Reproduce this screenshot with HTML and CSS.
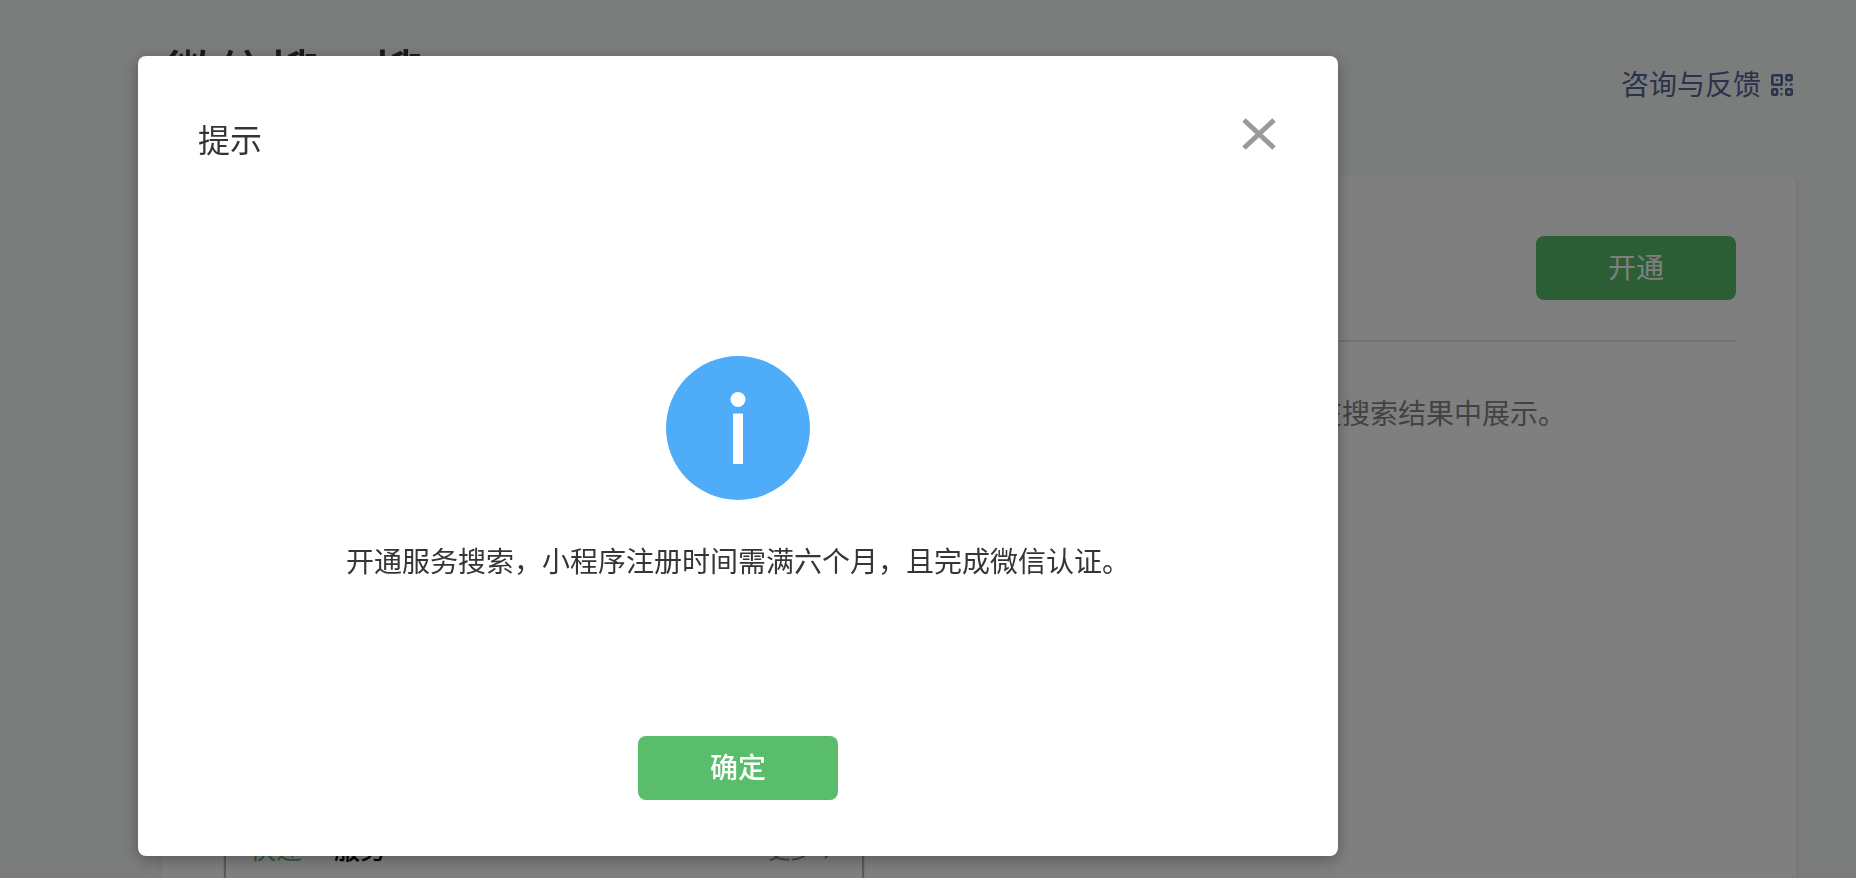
FILE: index.html
```html
<!DOCTYPE html>
<html lang="zh-CN">
<head>
    <meta charset="UTF-8">
    <meta name="viewport" content="width=device-width, initial-scale=1.0">
    <title>微信搜一搜</title>
    <link rel="stylesheet" href="styles.css">
</head>
<body>
    <main class="page">
        <header class="page-header">
            <h1>微信搜一搜</h1>
            <a href="#" class="feedback">
                咨询与反馈
                <svg class="qr" viewBox="0 0 22 22" fill="none" stroke="currentColor" stroke-width="2.6">
                    <rect x="1.3" y="1.3" width="9.4" height="9.4" rx="1"/>
                    <rect x="15.3" y="1.3" width="5.4" height="4.8" rx="1"/>
                    <rect x="1.3" y="15.3" width="4.8" height="5.4" rx="1"/>
                    <rect x="15.3" y="15.3" width="5.4" height="5.4" rx="1"/>
                    <path fill="currentColor" stroke="none" d="M5 5h2v2H5zM14 9.500h2v2h-2zM19 9.500h2.500v2H19zM9.500 14h2v2h-2zM9.500 19h2v2.500h-2z"/>
                </svg>
            </a>
        </header>

        <section class="card">
            <div class="card-head">
                <button type="button" class="btn">开通</button>
            </div>
            <p class="desc">在搜索结果中展示。</p>
            <div class="preview">
                <div class="preview-row">
                    <span class="keyword">快递</span>
                    <strong>服务</strong>
                    <a href="#" class="more">更多
                        <svg viewBox="0 0 10 18" fill="none" stroke="currentColor" stroke-width="2"><path d="M1 1l8 8-8 8"/></svg>
                    </a>
                </div>
            </div>
        </section>
    </main>

    <div class="mask">
        <div class="dialog" role="dialog" aria-modal="true" aria-labelledby="dialog-title">
            <div class="dialog-head">
                <h2 id="dialog-title">提示</h2>
                <button type="button" class="close" aria-label="关闭">
                    <svg viewBox="0 0 34 32" stroke="currentColor" stroke-width="5"><path d="M2 2l30 28M32 2L2 30"/></svg>
                </button>
            </div>
            <div class="dialog-body">
                <svg class="info" viewBox="0 0 144 144">
                    <circle cx="72" cy="72" r="72" fill="#4eacf9"/>
                    <circle cx="72" cy="43.500" r="7.500" fill="#fff"/>
                    <path fill="#fff" d="M67 57.500h10V108H67z"/>
                </svg>
                <p>开通服务搜索，小程序注册时间需满六个月，且完成微信认证。</p>
            </div>
            <div class="dialog-foot">
                <button type="button" class="btn btn-ok">确定</button>
            </div>
        </div>
    </div>
</body>
</html>
```

FILE: styles.css
```css
* {
    box-sizing: border-box;
}
body {
    margin: 0;
    height: 100vh;
    overflow: hidden;
    background: #f6f9f8;
    color: #353535;
    font-family: "Noto Sans CJK SC", "PingFang SC", sans-serif;
    font-size: 28px;
    line-height: 44px;
}
h1, h2, p {
    margin: 0;
}
a {
    text-decoration: none;
}
svg {
    display: block;
}

.page {
    height: 100vh;
    overflow: hidden;
    padding: 36px 60px 0 164px;
}
.page-header {
    display: flex;
    justify-content: space-between;
    align-items: center;
    margin-bottom: 68px;
}
h1 {
    font-size: 52px;
    font-weight: 500;
    line-height: 72px;
}
.feedback {
    display: flex;
    align-items: center;
    gap: 10px;
    padding: 22px 3px 0 0;
    color: #56649a;
}
.qr {
    width: 22px;
    height: 22px;
    margin-top: 4px;
}

.card {
    margin-left: -2px;
    padding: 60px;
    background: #fff;
    border-radius: 8px;
    box-shadow: 0 2px 6px rgba(0, 0, 0, 0.08);
}
.card-head {
    display: flex;
    justify-content: flex-end;
    padding-bottom: 40px;
    border-bottom: 2px solid #e4e4e4;
}
.btn {
    min-width: 200px;
    padding: 8px 40px 12px;
    border: none;
    border-radius: 8px;
    background: #59bd6c;
    color: #fff;
    font: inherit;
    cursor: pointer;
}
.btn:hover {
    background: #4fae62;
}
.btn-ok {
    font-weight: 500;
}
.desc {
    max-width: 1344px;
    margin-top: 48px;
    color: #858585;
    text-align: right;
}
.preview {
    max-width: 640px;
    margin: 40px 0 0 2px;
    padding: 350px 24px 80px;
    border: 2px solid #b4b4b4;
    box-shadow: 0 0 2px 1px rgba(0, 0, 0, 0.1);
}
.preview-row {
    display: flex;
    align-items: center;
    gap: 32px;
    font-size: 26px;
}
.preview-row strong {
    font-weight: 500;
    color: #000;
}
.keyword {
    color: #59bd6c;
}
.more {
    display: flex;
    align-items: center;
    gap: 12px;
    margin-left: auto;
    padding-right: 4px;
    color: #858585;
    font-size: 22px;
}
.more svg {
    width: 10px;
    height: 18px;
    margin-top: 4px;
}

/* Dialog */
.mask {
    position: fixed;
    inset: 0;
    padding: 56px 138px 0;
    background: rgba(0, 0, 0, 0.5);
}
.dialog {
    max-width: 1200px;
    padding: 60px 60px 56px;
    background: #fff;
    border-radius: 8px;
    box-shadow: 0 4px 16px rgba(0, 0, 0, 0.3);
}
.dialog-head {
    display: flex;
    justify-content: space-between;
    align-items: flex-start;
}
h2 {
    font-size: 32px;
    font-weight: 400;
    line-height: 44px;
}
.close {
    padding: 2px;
    border: none;
    background: none;
    color: #9a9a9a;
    cursor: pointer;
}
.close svg {
    width: 34px;
    height: 32px;
}
.dialog-body {
    display: flex;
    flex-direction: column;
    align-items: center;
    gap: 38px;
    padding: 196px 0 154px;
}
.info {
    width: 144px;
    height: 144px;
}
.dialog-foot {
    display: flex;
    justify-content: center;
}
```
